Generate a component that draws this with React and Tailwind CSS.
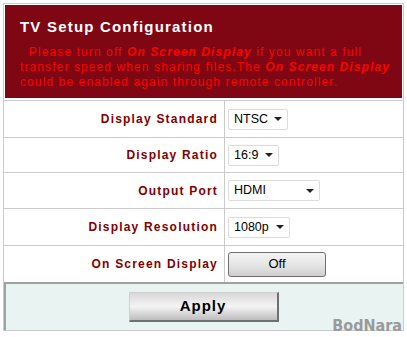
import { useState } from 'react'

const rows = [
  { label: 'Display Standard', value: 'NTSC', w: 'w-[60px]', h: 'h-[37px]' },
  { label: 'Display Ratio', value: '16:9', w: 'w-[51px]', h: 'h-[35px]' },
  { label: 'Output Port', value: 'HDMI', w: 'w-[92px]', h: 'h-[36px]' },
  { label: 'Display Resolution', value: '1080p', w: 'w-[62px]', h: 'h-[37px]' },
]

function Select({ value, w }) {
  return (
    <div className={`${w} flex h-[21px] items-center justify-between rounded-[2px] border border-[#dcdcdc] bg-white pl-[5px] pr-[5px] text-[12.5px] text-black`}>
      <span>{value}</span>
      <svg width="8" height="4" viewBox="0 0 8 4">
        <path d="M0 0h8L4 4z" fill="#222" />
      </svg>
    </div>
  )
}

function App() {
  const [osd, setOsd] = useState(false)

  return (
    <div className="relative h-[337px] w-[407px] overflow-hidden bg-white pl-[3px] pt-[3px] font-['Liberation_Sans',Arial,sans-serif]">
      <div className="w-[401px] border border-[#cbcbcb]">
        <div className="m-[1px] mb-[2px] h-[93px] bg-[#7e0713] pl-[15px] pr-2 pt-[13px]">
          <h1 className="text-[15px] font-bold leading-[18px] tracking-[1.2px] text-white">TV Setup Configuration</h1>
          <p className="mt-[9px] text-[12px] leading-[15px] tracking-[1.1px] text-[#f00]">
            &nbsp;&nbsp;Please turn off <b className="italic">On Screen Display</b> if you want a full transfer speed when sharing files.The <b className="italic">On Screen Display</b> could be enabled again through remote controller.
          </p>
        </div>

        {rows.map((r) => (
          <div key={r.label} className={`flex ${r.h} border-t border-[#cbcbcb]`}>
            <div className="flex w-[221px] items-center justify-end border-r border-[#cbcbcb] pr-[6px] text-[12px] font-bold tracking-[1.2px] text-[#800000]">
              {r.label}
            </div>
            <div className="flex items-center pl-[3px]">
              <Select value={r.value} w={r.w} />
            </div>
          </div>
        ))}

        <div className="flex h-[37px] border-t border-[#cbcbcb]">
          <div className="flex w-[221px] items-center justify-end border-r border-[#cbcbcb] pr-[6px] text-[12px] font-bold tracking-[1.2px] text-[#800000]">
            On Screen Display
          </div>
          <div className="flex items-center pl-[3px]">
            <button
              onClick={() => setOsd(!osd)}
              className="h-[25px] w-[98px] rounded-[3px] border border-[#6f6f6f] bg-gradient-to-b from-[#f4f4f4] via-[#e6e6e6] to-[#cfcfcf] text-[13px] text-black"
            >
              {osd ? 'On' : 'Off'}
            </button>
          </div>
        </div>

        <div className="flex h-[48px] items-center justify-center border-t-2 border-l-2 border-[#a0a0a0] bg-[#e9f3f2]">
          <button className="ml-[-2px] h-[30px] w-[150px] border border-[#cfcfcf] border-r-[#707070] border-b-[#707070] border-r-2 border-b-2 bg-gradient-to-b from-[#d8d8d8] via-[#f4f4f4] to-[#bdbdbd] text-[15px] font-bold tracking-[1px] text-black">
            Apply
          </button>
        </div>
      </div>

      <div className="absolute bottom-[-1px] right-[5px] font-['DejaVu_Sans_Condensed','DejaVu_Sans',sans-serif] text-[16px] font-bold text-[#9a9a9a]">
        BodNara
      </div>
    </div>
  )
}

export default App
